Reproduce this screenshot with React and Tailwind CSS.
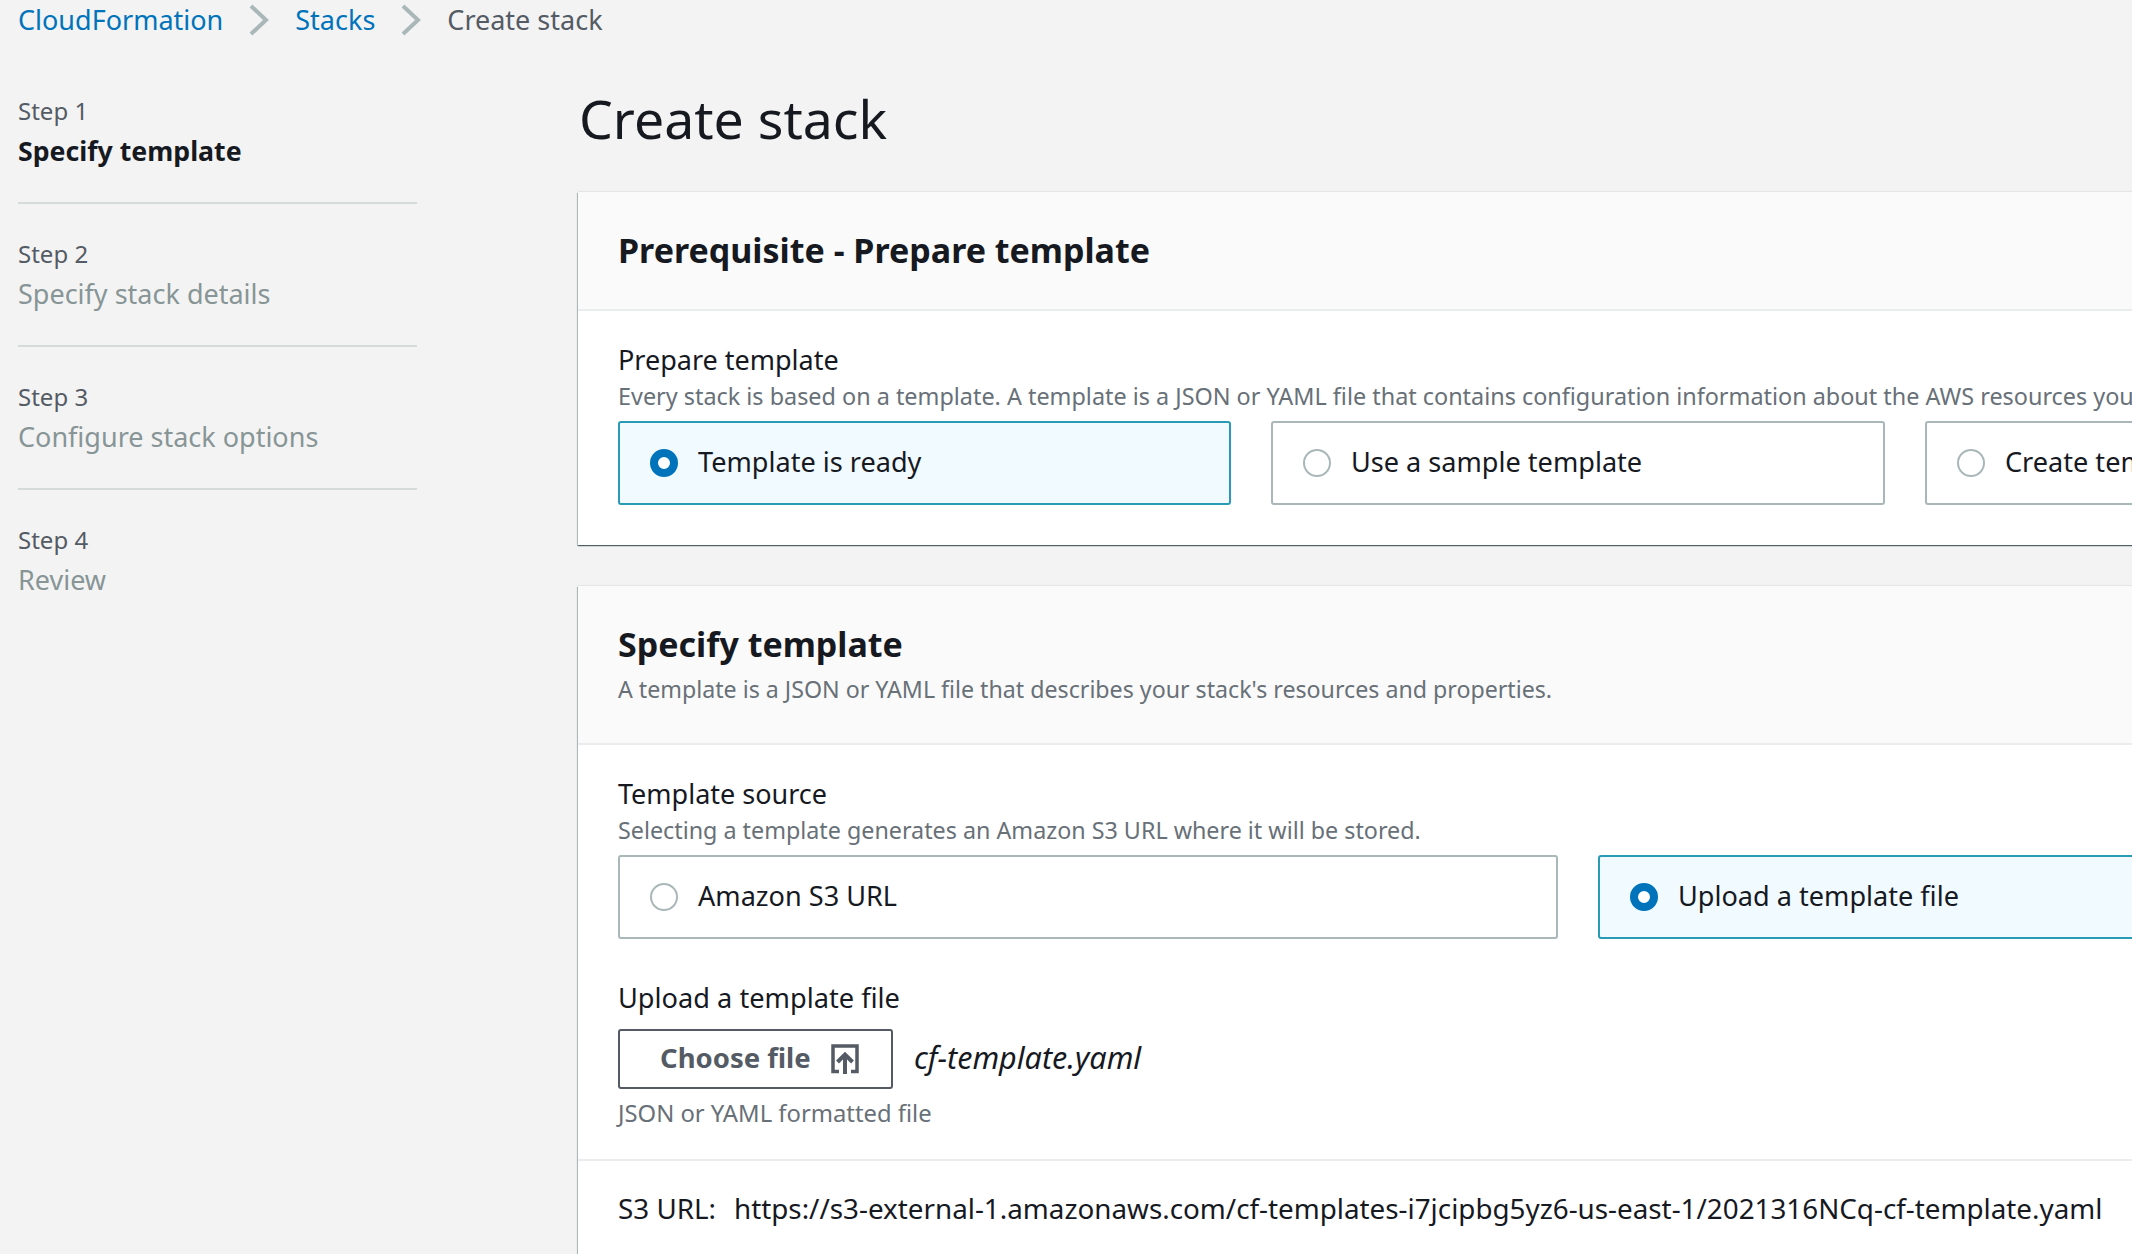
const font = { fontFamily: '"Noto Sans", sans-serif' };

function Radio({ on }) {
  return on ? (
    <span className="w-[28px] h-[28px] rounded-full border-[8px] border-[#0073bb] bg-white shrink-0" />
  ) : (
    <span className="w-[28px] h-[28px] rounded-full border-2 border-[#aab7b8] bg-white shrink-0" />
  );
}

function Card({ on, label, w, h }) {
  return (
    <div
      className={`flex items-center gap-[20px] pl-[30px] rounded-[3px] border-2 shrink-0 ${
        on ? "border-[#2a9bb5] bg-[#f1faff]" : "border-[#aab7b8] bg-white"
      } ${w} ${h}`}
    >
      <Radio on={on} />
      <span className="text-[27.1px] leading-[32px] pb-[2px] text-[#16191f] whitespace-nowrap">{label}</span>
    </div>
  );
}

function Step({ n, title, active, last }) {
  return (
    <div className="h-[143px] w-[399px]">
      <div className="h-[40px] pt-[3px] text-[24px] leading-[32px] text-[#545b64]">Step {n}</div>
      <div className={`h-[39px] leading-[38px] ${active ? "text-[26.7px] font-bold text-[#16191f]" : "text-[27px] text-[#879596]"}`}>
        {title}
      </div>
      {!last && <div className="mt-[31px] h-[2px] bg-[#d5dbdb]" />}
    </div>
  );
}

function Chevron() {
  return (
    <svg width="20" height="32" viewBox="0 0 20 32" className="shrink-0">
      <path d="M2 2 L17 16 L2 30" fill="none" stroke="#aab7b8" strokeWidth="4" />
    </svg>
  );
}

const panelShadow = "shadow-[0_1px_1px_0_rgba(0,28,36,0.5),1px_1px_1px_0_rgba(0,28,36,0.2),-1px_1px_1px_0_rgba(0,28,36,0.2),0_-1px_1px_0_rgba(0,28,36,0.06)]";

export default function App() {
  return (
    <div style={font} className="w-[2132px] h-[1254px] overflow-hidden bg-[#f3f3f3] text-[#16191f]">
      <div className="h-[40px] pl-[18px] flex items-center text-[27px] leading-[40px] whitespace-nowrap">
        <span className="text-[#0073bb]">CloudFormation</span>
        <span className="ml-[26px] mr-[26px]"><Chevron /></span>
        <span className="text-[#0073bb]">Stacks</span>
        <span className="ml-[26px] mr-[26px]"><Chevron /></span>
        <span className="text-[#545b64]">Create stack</span>
      </div>
      <div className="grid grid-cols-[578px_1554px]">
        <div className="pl-[18px] pt-[52px]">
          <Step n={1} title="Specify template" active />
          <Step n={2} title="Specify stack details" />
          <Step n={3} title="Configure stack options" />
          <Step n={4} title="Review" last />
        </div>
        <div className="min-w-0">
          <h1 className="h-[152px] pl-[1px] pt-[45px] text-[53.6px] leading-[68px] font-normal whitespace-nowrap">Create stack</h1>
          <section className={`w-[1700px] bg-white ${panelShadow}`}>
            <div className="h-[119px] bg-[#fafafa] border-b-2 border-[#eaeded] pl-[40px] pb-[2px] flex items-center">
              <h2 className="text-[34px] leading-[44px] font-bold whitespace-nowrap">Prerequisite - Prepare template</h2>
            </div>
            <div className="pl-[40px] pt-[31px] pb-[40px]">
              <div className="text-[27px] leading-[36px]">Prepare template</div>
              <div className="text-[23.4px] leading-[36px] text-[#687078] whitespace-nowrap">Every stack is based on a template. A template is a JSON or YAML file that contains configuration information about the AWS resources you want to include.</div>
              <div className="mt-[7px] flex gap-[40px]">
                <Card on label="Template is ready" w="w-[613px]" h="h-[84px]" />
                <Card label="Use a sample template" w="w-[614px]" h="h-[84px]" />
                <Card label="Create template in Designer" w="w-[613px]" h="h-[84px]" />
              </div>
            </div>
          </section>
          <section className={`mt-[41px] w-[1700px] bg-white ${panelShadow}`}>
            <div className="h-[159px] bg-[#fafafa] border-b-2 border-[#eaeded] pl-[40px] pt-[36px]">
              <h2 className="text-[34px] leading-[44px] font-bold whitespace-nowrap">Specify template</h2>
              <div className="mt-[5px] text-[23.2px] leading-[36px] text-[#687078] whitespace-nowrap">A template is a JSON or YAML file that describes your stack's resources and properties.</div>
            </div>
            <div className="h-[416px] border-b-2 border-[#eaeded] pl-[40px] pt-[31px]">
              <div className="text-[27px] leading-[36px]">Template source</div>
              <div className="text-[23.3px] leading-[36px] text-[#687078] whitespace-nowrap">Selecting a template generates an Amazon S3 URL where it will be stored.</div>
              <div className="mt-[7px] flex gap-[40px]">
                <Card label="Amazon S3 URL" w="w-[940px]" h="h-[84px]" />
                <Card on label="Upload a template file" w="w-[938px]" h="h-[84px]" />
              </div>
              <div className="mt-[41px] text-[27.2px] leading-[36px]">Upload a template file</div>
              <div className="mt-[13px] flex items-center">
                <button className="h-[60px] w-[275px] rounded-[3px] border-2 border-[#545b64] bg-white flex items-center pl-[40px] gap-[20px] text-[27.5px] leading-[36px] font-bold text-[#545b64]">
                  <span className="pb-[2px]">Choose file</span>
                  <svg width="28" height="30" viewBox="0 0 28 30" className="shrink-0">
                    <path d="M8 27.5 H2 V2 H26 V27.5 H20" fill="none" stroke="#545b64" strokeWidth="3.5" />
                    <path d="M14 30 V10 M6.5 18 L14 10.5 L21.5 18" fill="none" stroke="#545b64" strokeWidth="4" />
                  </svg>
                </button>
                <span className="ml-[21px] text-[30.5px] leading-[36px] pb-[4px] italic whitespace-nowrap">cf-template.yaml</span>
              </div>
              <div className="mt-[6px] text-[23.8px] leading-[36px] text-[#687078]">JSON or YAML formatted file</div>
            </div>
            <div className="h-[120px] pl-[40px] pt-[29px] flex text-[27.8px] leading-[36px] whitespace-nowrap">
              <span className="w-[116px]">S3 URL:</span>
              <span>https://s3-external-1.amazonaws.com/cf-templates-i7jcipbg5yz6-us-east-1/2021316NCq-cf-template.yaml</span>
            </div>
          </section>
        </div>
      </div>
    </div>
  );
}
